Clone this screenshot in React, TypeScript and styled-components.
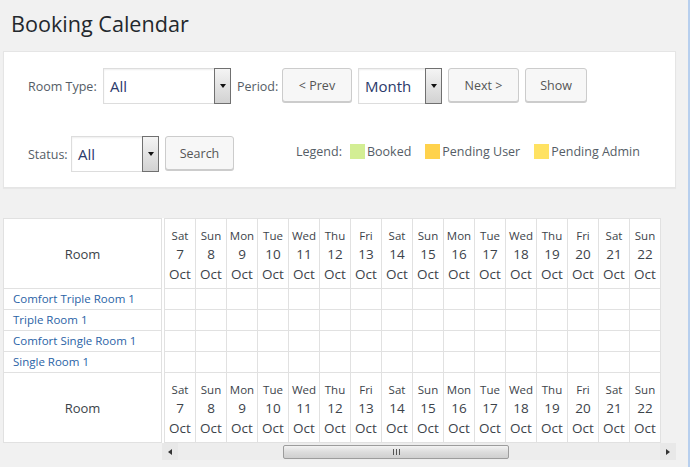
import React from "react";
import styled, { createGlobalStyle } from "styled-components";

const GlobalStyle = createGlobalStyle`
  body {
    margin: 0;
    background: #f1f1f1;
    font-family: "Open Sans", "Noto Sans", Arial, sans-serif;
  }
`;

interface WidthProps {
  w: number;
}

interface SwatchProps {
  color: string;
}

const Page = styled.div`
    width: 690px;
    height: 467px;
    box-sizing: border-box;
    padding-left: 3px;
    border-right: 2px solid #b7cfee;
    overflow: hidden;
  `,
  Title = styled.h1`
    margin: 0 0 13px;
    padding: 9px 0 0 8px;
    font-size: 21.6px;
    line-height: 29px;
    font-weight: 400;
    color: #23282d;
  `,
  Panel = styled.div`
    width: 673px;
    box-sizing: border-box;
    background: #fff;
    border: 1px solid #e5e5e5;
    box-shadow: 0 1px 1px rgba(0, 0, 0, 0.04);
    padding: 16px 24px 15px;
    display: flex;
    flex-direction: column;
    gap: 32px;
  `,
  Row = styled.div`
    display: flex;
    align-items: center;
    height: 36px;
    gap: 6px;
  `,
  Label = styled.span<WidthProps>`
    flex: none;
    width: ${({ w }) => `${w}px`};
    font-size: 12.5px;
    color: #555d66;
    white-space: nowrap;
  `,
  Select = styled.div<WidthProps>`
    flex: none;
    display: flex;
    width: ${({ w }) => `${w}px`};
    height: 36px;
    box-sizing: border-box;
    background: #fff;
    border: 1px solid #ddd;
    border-right: none;
    box-shadow: inset 0 1px 2px rgba(0, 0, 0, 0.07);
  `,
  SelectValue = styled.span`
    flex: 1;
    align-self: center;
    padding-left: 6px;
    font-size: 15px;
    color: #2b3a6b;
  `,
  DropButton = styled.div`
    width: 17px;
    margin-top: -1px;
    margin-bottom: -1px;
    box-sizing: border-box;
    border: 1px solid #707070;
    background: linear-gradient(#f4f4f4, #d2d2d2);
    display: flex;
    align-items: center;
    justify-content: center;
    &::after {
      content: "";
      border-left: 3.5px solid transparent;
      border-right: 3.5px solid transparent;
      border-top: 4px solid #111;
    }
  `,
  Button = styled.button<WidthProps>`
    flex: none;
    width: ${({ w }) => `${w}px`};
    height: 34px;
    margin-bottom: 2px;
    padding: 0;
    background: #f7f7f7;
    border: 1px solid #ccc;
    border-radius: 3px;
    box-shadow: 0 1px 0 #ccc;
    color: #555;
    font-family: inherit;
    font-size: 12.5px;
  `,
  Legend = styled.div`
    display: flex;
    align-items: center;
    margin-left: 56px;
    margin-bottom: 6px;
    font-size: 12.5px;
    color: #555d66;
    white-space: nowrap;
  `,
  LegendTitle = styled.span`
    margin-right: 8px;
  `,
  Swatch = styled.span<SwatchProps>`
    flex: none;
    width: 15px;
    height: 15px;
    margin-right: 2px;
    background: ${({ color }) => color};
  `,
  LegendText = styled.span`
    margin-right: 14px;
  `,
  Calendar = styled.div`
    display: flex;
    margin-top: 30px;
  `,
  RoomTable = styled.div`
    width: 159px;
    box-sizing: border-box;
    border: 1px solid #e1e1e1;
    border-bottom: none;
    background: #fff;
    align-self: flex-start;
  `,
  RoomHead = styled.div`
    height: 70px;
    box-sizing: border-box;
    border-bottom: 1px solid #e1e1e1;
    display: flex;
    align-items: center;
    justify-content: center;
    font-size: 13px;
    color: #3c434a;
  `,
  RoomRow = styled.div`
    height: 21px;
    box-sizing: border-box;
    border-bottom: 1px solid #e1e1e1;
    padding-left: 9px;
    font-size: 11.5px;
    line-height: 19px;
    color: #2a63a6;
    white-space: nowrap;
  `,
  DatesPane = styled.div`
    display: flex;
    flex-direction: column;
    margin-left: 2px;
    width: 512px;
  `,
  DateGrid = styled.div`
    display: grid;
    grid-template-columns: repeat(16, 31px);
    align-self: flex-start;
    border-top: 1px solid #e1e1e1;
    border-left: 1px solid #e1e1e1;
    background: #fff;
    box-shadow: -2px 0 0 #fff;
  `,
  DayHead = styled.div`
    height: 70px;
    box-sizing: border-box;
    border-right: 1px solid #e1e1e1;
    border-bottom: 1px solid #e1e1e1;
    padding-top: 7px;
    display: flex;
    flex-direction: column;
    align-items: center;
    color: #3c434a;
  `,
  DayName = styled.span`
    font-size: 11.5px;
    line-height: 19px;
  `,
  DayNum = styled.span`
    font-size: 13.5px;
    line-height: 19.5px;
  `,
  DayCell = styled.div`
    height: 21px;
    box-sizing: border-box;
    border-right: 1px solid #e1e1e1;
    border-bottom: 1px solid #e1e1e1;
  `,
  ScrollBar = styled.div`
    display: flex;
    align-items: center;
    height: 17px;
    margin-left: -2px;
    background: #ededed;
  `,
  ArrowBox = styled.div`
    width: 16px;
    height: 17px;
    display: flex;
    align-items: center;
    justify-content: center;
    background: #e8e8e8;
  `,
  ArrowLeft = styled.span`
    border-top: 3.5px solid transparent;
    border-bottom: 3.5px solid transparent;
    border-right: 4px solid #333;
  `,
  ArrowRight = styled.span`
    border-top: 3.5px solid transparent;
    border-bottom: 3.5px solid transparent;
    border-left: 4px solid #333;
  `,
  Track = styled.div`
    flex: 1;
    display: flex;
    height: 17px;
    align-items: center;
  `,
  Thumb = styled.div`
    width: 226px;
    height: 14px;
    margin-left: 105px;
    box-sizing: border-box;
    border: 1px solid #9c9c9c;
    border-radius: 2px;
    background: linear-gradient(#f3f3f3, #dcdcdc 50%, #cfcfcf);
    display: flex;
    align-items: center;
    justify-content: center;
    gap: 2px;
  `,
  Grip = styled.span`
    width: 1px;
    height: 6px;
    background: #555;
  `;

const days = [
  ["Sat", 7],
  ["Sun", 8],
  ["Mon", 9],
  ["Tue", 10],
  ["Wed", 11],
  ["Thu", 12],
  ["Fri", 13],
  ["Sat", 14],
  ["Sun", 15],
  ["Mon", 16],
  ["Tue", 17],
  ["Wed", 18],
  ["Thu", 19],
  ["Fri", 20],
  ["Sat", 21],
  ["Sun", 22],
];

const rooms = [
  "Comfort Triple Room 1",
  "Triple Room 1",
  "Comfort Single Room 1",
  "Single Room 1",
];

const DayHeaders = () => (
  <>
    {days.map(([name, num], i) => (
      <DayHead key={`h${i}`}>
        <DayName>{name}</DayName>
        <DayNum>{num}</DayNum>
        <DayNum>Oct</DayNum>
      </DayHead>
    ))}
  </>
);

const App = () => {
  return (
    <Page>
      <GlobalStyle />
      <Title>Booking Calendar</Title>

      <Panel>
        <Row>
          <Label w={69}>Room Type:</Label>
          <Select w={128}>
            <SelectValue>All</SelectValue>
            <DropButton />
          </Select>
          <Label w={39}>Period:</Label>
          <Button w={70}>&lt; Prev</Button>
          <Select w={84}>
            <SelectValue>Month</SelectValue>
            <DropButton />
          </Select>
          <Button w={71}>Next &gt;</Button>
          <Button w={62}>Show</Button>
        </Row>
        <Row>
          <Label w={37}>Status:</Label>
          <Select w={88}>
            <SelectValue>All</SelectValue>
            <DropButton />
          </Select>
          <Button w={69}>Search</Button>
          <Legend>
            <LegendTitle>Legend:</LegendTitle>
            <Swatch color="#d3ee94" />
            <LegendText>Booked</LegendText>
            <Swatch color="#ffd24c" />
            <LegendText>Pending User</LegendText>
            <Swatch color="#ffe262" />
            <LegendText>Pending Admin</LegendText>
          </Legend>
        </Row>
      </Panel>

      <Calendar>
        <RoomTable>
          <RoomHead>Room</RoomHead>
          {rooms.map((r) => (
            <RoomRow key={r}>{r}</RoomRow>
          ))}
          <RoomHead>Room</RoomHead>
        </RoomTable>

        <DatesPane>
          <DateGrid>
            <DayHeaders />
            {rooms.map((r) =>
              days.map((_, i) => <DayCell key={`${r}${i}`} />)
            )}
            <DayHeaders />
          </DateGrid>
          <ScrollBar>
            <ArrowBox>
              <ArrowLeft />
            </ArrowBox>
            <Track>
              <Thumb>
                <Grip />
                <Grip />
                <Grip />
              </Thumb>
            </Track>
            <ArrowBox>
              <ArrowRight />
            </ArrowBox>
          </ScrollBar>
        </DatesPane>
      </Calendar>
    </Page>
  );
};

export default App;
